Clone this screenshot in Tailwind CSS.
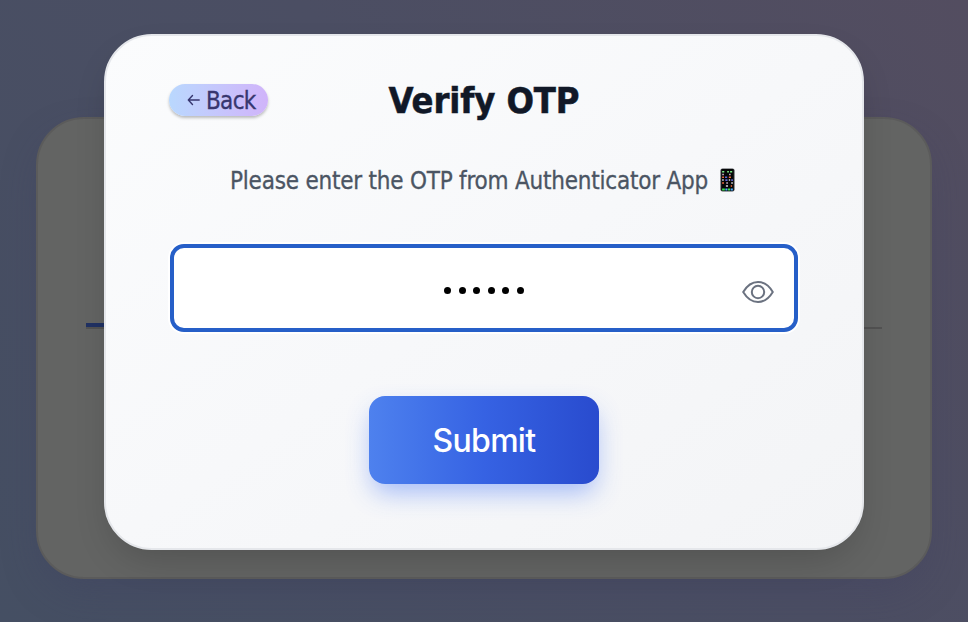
<!DOCTYPE html>
<html lang="en">
<head>
<meta charset="utf-8">
<title>Verify OTP</title>
<script src="https://cdn.jsdelivr.net/npm/@tailwindcss/browser@4"></script>
</head>
<body class="h-[622px] w-[968px] overflow-hidden bg-[linear-gradient(50deg,#454f63_0%,#4b4e63_55%,#534d60_100%)] font-['DejaVu_Sans_Condensed','DejaVu_Sans',sans-serif]">
<div class="grid h-full">
  <!-- Page card behind the dialog -->
  <section class="col-start-1 row-start-1 mx-9 mt-[117px] h-[462px] rounded-[48px] border-2 border-[#5b5b5b] bg-[#636463] px-12 pt-[204px] shadow-[0_16px_40px_-8px_rgba(60,60,95,0.35)]">
    <div class="flex h-[6px] border-b-2 border-[#525252]"><div class="h-1 w-32 bg-[#203163]"></div></div>
  </section>

  <!-- Dialog -->
  <main role="dialog" class="z-10 col-start-1 row-start-1 mx-[104px] mt-[34px] flex h-[516px] flex-col items-center rounded-[48px] border-2 border-[#e5e7eb] bg-linear-to-br from-[#fbfcfd] via-[#f7f8fa] to-[#f3f4f6] px-16 pt-[47px] shadow-[0_16px_38px_-10px_rgba(0,0,0,0.2)]">
    <header class="grid h-[34px] w-full grid-cols-[1fr_auto_1fr] items-center">
      <button class="ml-[-1px] flex h-8 w-[99px] items-center rounded-full bg-linear-to-r from-[#b9d8fe] to-[#d0b4fa] pl-[18px] text-[#37366f] shadow-[0_2px_3px_rgba(0,0,0,0.25)]">
        <svg class="mr-[5px] h-3 w-[14px] shrink-0" viewBox="0 0 14 12" fill="none" stroke="currentColor" stroke-width="1.4" stroke-linecap="round" stroke-linejoin="round"><path d="M12.2 6H1.5M5.5 1.6L1.3 6l4.2 4.4"/></svg>
        <span class="translate-y-px text-[24px] leading-8 tracking-[-0.7px] [-webkit-text-stroke:0.3px_currentColor]">Back</span>
      </button>
      <h1 class="translate-y-px text-[36px] leading-[34px] font-bold tracking-[-0.1px] whitespace-nowrap text-[#111827] [-webkit-text-stroke:0.5px_currentColor]">Verify OTP</h1>
      <span></span>
    </header>

    <p class="mt-[46px] flex h-9 items-center text-[24px] tracking-[-0.22px] whitespace-nowrap text-[#4b5563]">
      <span class="[-webkit-text-stroke:0.3px_currentColor]">Please enter the OTP from Authenticator App</span>
      <svg class="mr-[3px] mb-[2px] ml-[12px] h-6 w-[15px]" viewBox="0 0 14 24" preserveAspectRatio="none" role="img" aria-label="Mobile phone">
        <rect x=".4" y=".4" width="13.2" height="23.2" rx="2" fill="#45484c"/><rect x="1.2" y="1.1" width="11.6" height="21.8" rx="1.3" fill="#050607"/>
        <path d="M2 3.7h2m2.7 0h1.6m1.1 0h2" stroke="#7de985" stroke-width="1.6"/>
        <path d="M2 6.5h1.7m4.7 0H10M5.8 15h1.7" stroke="#bca4ba" stroke-width="1.6"/>
        <path d="M2 9.2h1.7m4.5 0h2M2 15h1.7m6.3 3h1.3" stroke="#f16c3e" stroke-width="1.6"/>
        <path d="M4.7 9.2h2M5 12.1h2m3.5 0H12" stroke="#6267df" stroke-width="1.6"/>
        <path d="M2 12.1h1.5m4.7 0h1.3m-4 5.9h2m3-3H12" stroke="#d9d9dc" stroke-width="1.5"/>
        <path d="M2 21.5h2.500m3 0h2" stroke="#3fe554" stroke-width="1.900"/><path d="M5 21.500h2m3 0h2" stroke="#48aaff" stroke-width="1.900"/>
      </svg>
    </p>

    <div class="mt-[45px] flex h-[88px] w-[628px] shrink-0 items-center rounded-[14px] border-4 border-[#265fc8] bg-white pr-5 pl-[270px] shadow-[0_0_0_2px_white]">
      <div role="textbox" aria-label="One-time password" class="mt-[5px] flex gap-[7.5px]">
        <i class="h-[7px] w-[7px] rounded-full bg-black"></i><i class="h-[7px] w-[7px] rounded-full bg-black"></i><i class="h-[7px] w-[7px] rounded-full bg-black"></i><i class="h-[7px] w-[7px] rounded-full bg-black"></i><i class="h-[7px] w-[7px] rounded-full bg-black"></i><i class="h-[7px] w-[7px] rounded-full bg-black"></i>
      </div>
      <svg class="mt-2 ml-auto h-6 w-8" viewBox="0 0 32 24" fill="none" stroke="#6b7280" stroke-width="2" stroke-linejoin="round"><path d="M1.2 12C5.2 5.3 10 2 16 2s10.800 3.300 14.800 10C26.800 18.700 22 22 16 22S5.200 18.700 1.200 12Z"/><circle cx="16" cy="12" r="6.200"/></svg>
    </div>

    <button class="mt-16 flex h-[88px] w-[230px] items-center justify-center rounded-2xl bg-linear-to-r from-[#4e81ee] via-[#3662e3] to-[#294bce] pt-[2px] font-['Inter',sans-serif] text-[32px] font-medium tracking-[-0.7px] text-white shadow-[0_12px_26px_-4px_rgba(59,110,246,0.45)]">Submit</button>
  </main>
</div>
</body>
</html>
